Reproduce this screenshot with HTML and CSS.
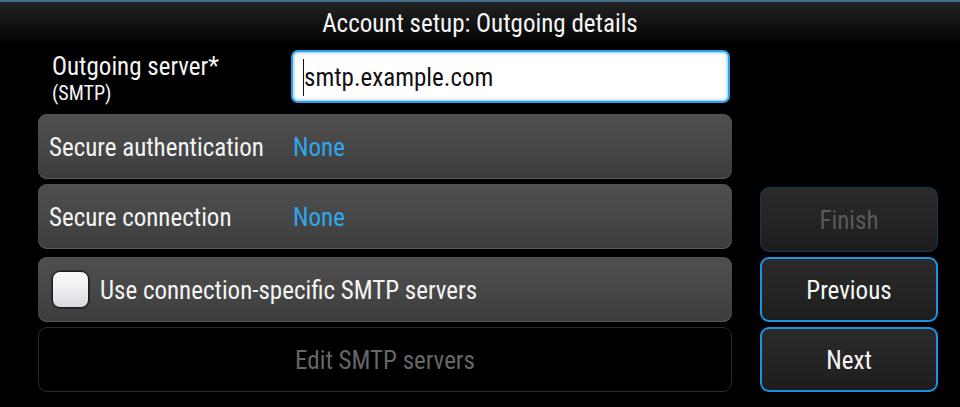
FILE: index.html
```html
<!DOCTYPE html>
<html lang="en">
<head>
<meta charset="utf-8">
<title>Account setup: Outgoing details</title>
<link rel="stylesheet" href="styles.css">
</head>
<body>
<div class="screen">
  <header class="titlebar">Account setup: Outgoing details</header>
  <main class="content">
    <section class="form">
      <div class="field">
        <div class="field-label">
          <span class="label-main">Outgoing server*</span>
          <span class="label-sub">(SMTP)</span>
        </div>
        <div class="input"><span class="caret"></span>smtp.example.com</div>
      </div>
      <div class="row row-first">
        <span class="row-label">Secure authentication</span>
        <span class="row-value">None</span>
      </div>
      <div class="row row-second">
        <span class="row-label">Secure connection</span>
        <span class="row-value">None</span>
      </div>
      <div class="row row-check">
        <span class="checkbox"></span>
        <span class="check-label">Use connection-specific SMTP servers</span>
      </div>
      <div class="row-disabled">Edit SMTP servers</div>
    </section>
    <aside class="actions">
      <div class="btn btn-disabled">Finish</div>
      <div class="btn">Previous</div>
      <div class="btn">Next</div>
    </aside>
  </main>
</div>
</body>
</html>
```
FILE: styles.css
```css
* { box-sizing: border-box; }

html, body {
  margin: 0;
  padding: 0;
  background: #000;
}

body {
  font-family: "Roboto", "Liberation Sans Narrow", sans-serif;
  font-stretch: condensed;
  font-size: 25px;
  color: #f4f4f4;
}

.screen {
  width: 960px;
  height: 407px;
  overflow: hidden;
  background: #000;
}

.titlebar {
  height: 45px;
  border-top: 2px solid #41718f;
  background: linear-gradient(to bottom, #222 0%, #141414 45%, #000 100%);
  text-align: center;
  line-height: 44px;
  font-size: 25px;
  color: #f6f6f6;
  white-space: nowrap;
}

.content {
  display: flex;
  padding-left: 38px;
}

.form {
  width: 694px;
  display: flex;
  flex-direction: column;
}

.field {
  display: flex;
  margin-top: 5px;
  height: 53px;
}

.field-label {
  width: 253px;
  padding-left: 14px;
  padding-top: 4px;
  display: flex;
  flex-direction: column;
  line-height: 26px;
  white-space: nowrap;
}

.label-main { font-size: 25px; }
.label-sub { font-size: 20px; }

.input {
  width: 439px;
  height: 53px;
  background: #fff;
  border: 2px solid #2e9fea;
  border-radius: 7px;
  box-shadow: inset 0 0 3px 1px rgba(46,159,234,0.55);
  color: #111;
  display: flex;
  align-items: center;
  padding-left: 10px;
  font-size: 25px;
  padding-top: 1px;
  white-space: nowrap;
}

.caret {
  display: inline-block;
  width: 1px;
  height: 37px;
  background: #111;
}

.row {
  height: 65px;
  border-radius: 9px;
  background: linear-gradient(to bottom, #4e4e4e 0%, #474747 50%, #3c3c3c 100%);
  box-shadow: inset 0 -1px 0 #5a5a5a, inset 0 1px 0 #525252;
  display: flex;
  align-items: center;
  white-space: nowrap;
}

.row-first { margin-top: 11px; }
.row-second { margin-top: 5px; }
.row-check { margin-top: 8px; }

.row-label {
  width: 255px;
  padding-left: 11px;
  padding-top: 1px;
}

.row-value {
  color: #2ea7ee;
  padding-top: 1px;
}

.checkbox {
  width: 37px;
  height: 37px;
  margin-left: 14px;
  margin-right: 11px;
  border-radius: 8px;
  border: 1px solid #1e1e1e;
  background: linear-gradient(to bottom, #fafafa 0%, #eeeef2 50%, #d9d8e0 100%);
  box-shadow: 0 0 0 1px rgba(0,0,0,0.35);
}

.check-label { padding-top: 1px; }

.row-disabled {
  margin-top: 5px;
  height: 65px;
  border: 1px solid #2b2b2b;
  border-radius: 9px;
  background: #000;
  color: #666;
  display: flex;
  align-items: center;
  justify-content: center;
  padding-top: 1px;
}

.actions {
  width: 178px;
  margin-left: 28px;
  padding-top: 142px;
  display: flex;
  flex-direction: column;
  gap: 5px;
}

.btn {
  height: 65px;
  border: 2px solid #1a93e6;
  border-radius: 9px;
  background: linear-gradient(to bottom, #2a2a2a 0%, #232323 60%, #1d1d1d 100%);
  display: flex;
  align-items: center;
  justify-content: center;
  color: #f6f6f6;
  padding-top: 1px;
}

.btn-disabled {
  border-color: #123a57;
  border-width: 1px;
  color: #5a5a5a;
}
```
